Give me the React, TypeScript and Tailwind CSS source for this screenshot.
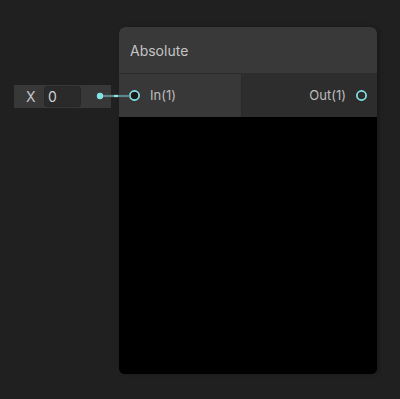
export default function App() {
  return (
    <div
      className="relative h-[399px] w-[400px] overflow-hidden bg-[#202020]"
      style={{ fontFamily: "Inter, 'Noto Sans', sans-serif" }}
    >
      {/* inline value field */}
      <div className="absolute left-[14px] top-[85px] flex h-[23px] w-[97px] items-center bg-[#383838]">
        <span className="ml-[12px] w-[14px] text-[14px] text-[#c4c4c4]">X</span>
        <div className="ml-[4px] flex h-[21px] w-[37px] items-center rounded-[3px] border border-[#262626] bg-[#2a2a2a] pl-[3px] text-[14px] text-[#d0d0d0]">
          0
        </div>
      </div>

      {/* node */}
      <div className="absolute left-[119px] top-[27px] flex h-[347px] w-[258px] flex-col overflow-hidden rounded-[6px] bg-black shadow-[2px_0_4px_rgba(0,0,0,0.25)]">
        <div className="flex h-[47px] items-center border-b border-[#2c2c2c] bg-[#393939] pl-[11px] text-[14px] text-[#c4c4c4]">
          Absolute
        </div>
        <div className="flex h-[43px]">
          <div className="flex w-[123px] items-center border-r border-[#2a2a2a] bg-[#383838]">
            <svg className="ml-[9px]" width="13" height="13">
              <circle cx="6.5" cy="6.5" r="4.6" fill="#1a1a1a" stroke="#84e4e7" strokeWidth="1.7" />
            </svg>
            <span className="ml-[9px] text-[13px] text-[#bdbdbd]">In(1)</span>
          </div>
          <div className="flex flex-1 items-center justify-end bg-[#2d2d2d]">
            <span className="text-[13px] text-[#bdbdbd]">Out(1)</span>
            <svg className="ml-[9px] mr-[9px]" width="13" height="13">
              <circle cx="6.5" cy="6.5" r="4.6" fill="#2d2d2d" stroke="#84e4e7" strokeWidth="1.7" />
            </svg>
          </div>
        </div>
        <div className="flex-1 bg-black" />
      </div>

      {/* edge, drawn over the node up to the input port */}
      <svg className="absolute left-[94px] top-[88px] z-10" width="40" height="16">
        <line x1="6" y1="8" x2="35.5" y2="8" stroke="#5f8587" strokeWidth="2.2" />
        <line x1="20" y1="8" x2="24" y2="8" stroke="#84e4e7" strokeWidth="2.2" />
        <circle cx="6" cy="8" r="3.2" fill="#84e4e7" />
      </svg>
    </div>
  );
}
